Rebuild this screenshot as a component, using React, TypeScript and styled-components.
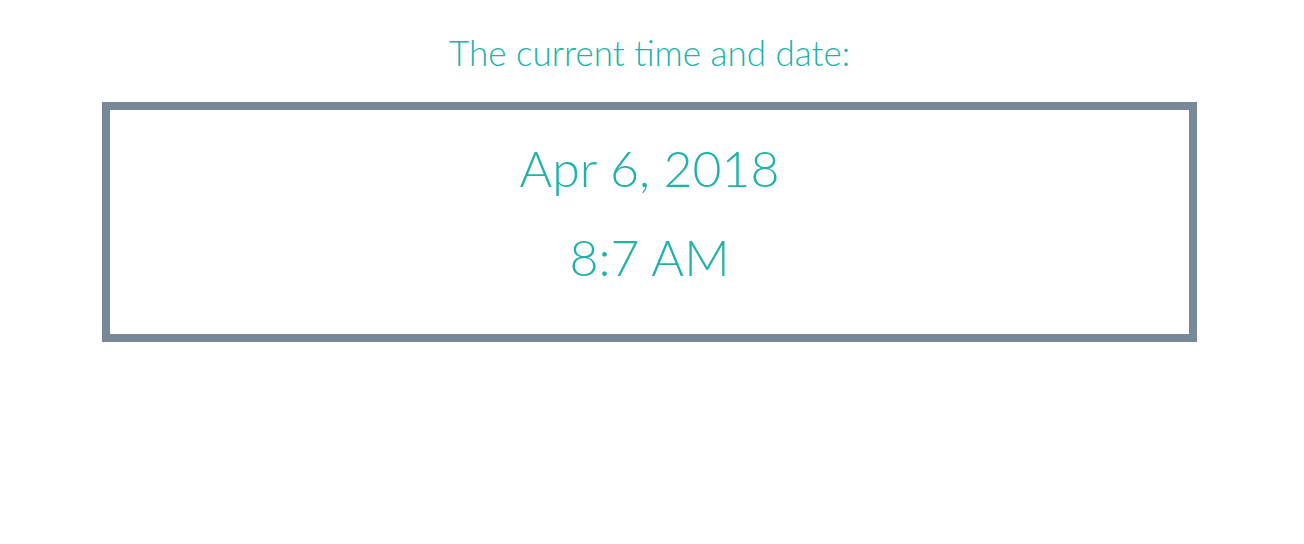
import styled, { createGlobalStyle } from "styled-components";

const GlobalStyle = createGlobalStyle`
  body {
    margin: 0;
    background: #fff;
    font-family: "Lato", "Liberation Sans", sans-serif;
  }
`;

const Page = styled.div`
  width: 1299px;
  display: flex;
  flex-direction: column;
  align-items: center;
  color: #20b2aa;
`;

const Heading = styled.h1`
  margin: 30px 0 28px;
  font-size: 35px;
  font-weight: 300;
  line-height: 44px;
`;

const Clock = styled.div`
  box-sizing: border-box;
  width: 1095px;
  height: 240px;
  border: 8px solid #778899;
  padding-top: 14px;
  display: flex;
  flex-direction: column;
  align-items: center;
`;

const Line = styled.div`
  font-size: 50px;
  font-weight: 300;
  line-height: 89px;
`;

export default function App() {
  return (
    <>
      <GlobalStyle />
      <Page>
        <Heading>The current time and date:</Heading>
        <Clock>
          <Line>Apr 6, 2018</Line>
          <Line>8:7 AM</Line>
        </Clock>
      </Page>
    </>
  );
}
